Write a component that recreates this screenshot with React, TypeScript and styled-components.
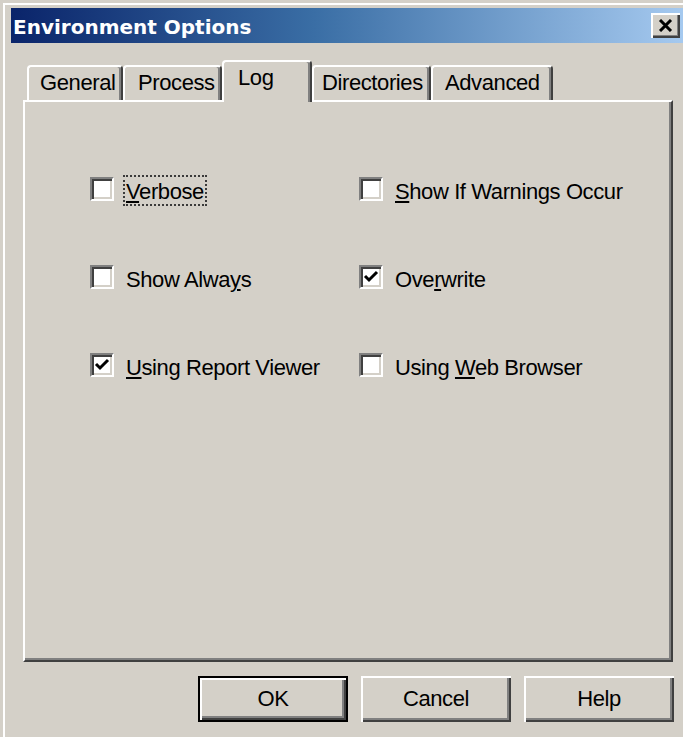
import React from "react";
import styled, { createGlobalStyle } from "styled-components";

const Global = createGlobalStyle`
  html, body {
    margin: 0;
    padding: 0;
    background: #d4d0c8;
    overflow: hidden;
  }
  * { box-sizing: border-box; }
`;

const UI_FONT = `"Liberation Sans", Arial, sans-serif`;

const Window = styled.div`
  width: 692px;
  height: 760px;
  padding: 8px 6px 0 11px;
  background: #d4d0c8;
  box-shadow: inset 3px 3px 0 #d4d0c8, inset 5px 5px 0 #ffffff;
  font-family: ${UI_FONT};
  font-size: 22px;
  letter-spacing: -0.4px;
  color: #000;
`;

const TitleBar = styled.div`
  height: 35px;
  display: flex;
  align-items: center;
  justify-content: space-between;
  padding: 2px 6px 0 2px;
  background: linear-gradient(90deg, #0a246a 0%, #3a6ea5 45%, #a6caf0 100%);
`;

const Title = styled.span`
  font-family: "DejaVu Sans", Verdana, sans-serif;
  font-weight: bold;
  font-size: 20px;
  letter-spacing: 0;
  color: #ffffff;
  line-height: 24px;
`;

const CloseButton = styled.button`
  width: 29px;
  height: 25px;
  margin-top: -2px;
  padding: 0;
  display: flex;
  align-items: center;
  justify-content: center;
  background: #d4d0c8;
  border: none;
  box-shadow: inset 2px 2px 0 #ffffff, inset -2px -2px 0 #404040,
    inset -3px -3px 0 #808080;
`;

const Body = styled.div`
  padding: 17px 0 0 12px;
  width: 662px;
`;

const TabStrip = styled.div`
  display: flex;
  align-items: flex-end;
  height: 40px;
  padding-left: 4px;
  position: relative;
  z-index: 1;
`;

const Tab = styled.div<{ $w: number; $active?: boolean; $pad: number }>`
  width: ${(p) => p.$w}px;
  height: ${(p) => (p.$active ? 42 : 35)}px;
  margin-bottom: ${(p) => (p.$active ? -2 : 0)}px;
  padding: 3px 0 0 ${(p) => p.$pad}px;
  line-height: 25px;
  white-space: nowrap;
  background: #d4d0c8;
  border-top: 2px solid #ffffff;
  border-left: 2px solid #ffffff;
  border-right: 2px solid #404040;
  border-top-left-radius: 4px;
  border-top-right-radius: 4px;
  box-shadow: inset -2px 0 0 #808080;
`;

const Panel = styled.div`
  width: 650px;
  height: 562px;
  background: #d4d0c8;
  border-top: 2px solid #ffffff;
  border-left: 2px solid #ffffff;
  border-right: 2px solid #404040;
  border-bottom: 2px solid #404040;
  box-shadow: inset -2px -2px 0 #808080;
  padding: 75px 0 0 65px;
`;

const OptionGrid = styled.div`
  display: grid;
  grid-template-columns: 269px auto;
  grid-auto-rows: 24px;
  row-gap: 64px;
`;

const Option = styled.div`
  display: flex;
  align-items: center;
  gap: 9px;
`;

const Box = styled.span`
  width: 24px;
  height: 24px;
  flex: none;
  display: flex;
  align-items: center;
  justify-content: center;
  background: #ffffff;
  border-top: 2px solid #808080;
  border-left: 2px solid #808080;
  border-right: 2px solid #ffffff;
  border-bottom: 2px solid #ffffff;
  box-shadow: inset 2px 2px 0 #404040, inset -2px -2px 0 #d4d0c8;
`;

const Label = styled.span<{ $focus?: boolean }>`
  padding: 2px 1px 0;
  line-height: 25px;
  white-space: nowrap;
  border: 2px dotted ${(p) => (p.$focus ? "#3a3a3a" : "transparent")};
  margin-top: 3px;
`;

const Key = styled.u`
  text-decoration-thickness: 2px;
  text-underline-offset: 2px;
`;

const ButtonRow = styled.div`
  display: flex;
  justify-content: flex-end;
  gap: 13px;
  margin-top: 14px;
  width: 651px;
`;

const Button = styled.button<{ $default?: boolean }>`
  width: 150px;
  height: 46px;
  padding: 0;
  font-family: ${UI_FONT};
  font-size: 22px;
  letter-spacing: -0.4px;
  color: #000;
  background: #d4d0c8;
  border: ${(p) => (p.$default ? "2px solid #000" : "none")};
  box-shadow: ${(p) =>
    p.$default
      ? "inset 2px 2px 0 #ffffff, inset -2px -2px 0 #404040, inset -4px -4px 0 #808080"
      : "inset 2px 2px 0 #ffffff, inset -2px -2px 0 #404040, inset -4px -4px 0 #808080"};
`;

const CheckMark = () => (
  <svg width="16" height="16" viewBox="0 0 16 16">
    <path d="M2 7 L6 11 L14 3" fill="none" stroke="#000" strokeWidth="3" />
  </svg>
);

const CloseGlyph = () => (
  <svg width="15" height="13" viewBox="0 0 15 13">
    <path d="M2 1 L13 12 M13 1 L2 12" stroke="#000" strokeWidth="3" />
  </svg>
);

type Opt = { id: string; checked: boolean; focus?: boolean; label: React.ReactNode };

const options: Opt[] = [
  { id: "verbose", checked: false, focus: true, label: <><Key>V</Key>erbose</> },
  { id: "warn", checked: false, label: <><Key>S</Key>how If Warnings Occur</> },
  { id: "always", checked: false, label: <>Show Alwa<Key>y</Key>s</> },
  { id: "overwrite", checked: true, label: <>Ove<Key>r</Key>write</> },
  { id: "viewer", checked: true, label: <><Key>U</Key>sing Report Viewer</> },
  { id: "browser", checked: false, label: <>Using <Key>W</Key>eb Browser</> },
];

const tabs = [
  { name: "General", w: 96, pad: 11 },
  { name: "Process", w: 99, pad: 13 },
  { name: "Log", w: 90, pad: 14, active: true },
  { name: "Directories", w: 119, pad: 8 },
  { name: "Advanced", w: 122, pad: 12 },
];

export default function App() {
  return (
    <>
      <Global />
      <Window>
        <TitleBar>
          <Title>Environment Options</Title>
          <CloseButton aria-label="Close">
            <CloseGlyph />
          </CloseButton>
        </TitleBar>
        <Body>
          <TabStrip>
            {tabs.map((t) => (
              <Tab key={t.name} $w={t.w} $pad={t.pad} $active={t.active}>
                {t.name}
              </Tab>
            ))}
          </TabStrip>
          <Panel>
            <OptionGrid>
              {options.map((o) => (
                <Option key={o.id}>
                  <Box>{o.checked && <CheckMark />}</Box>
                  <Label $focus={o.focus}>{o.label}</Label>
                </Option>
              ))}
            </OptionGrid>
          </Panel>
          <ButtonRow>
            <Button $default>OK</Button>
            <Button>Cancel</Button>
            <Button>Help</Button>
          </ButtonRow>
        </Body>
      </Window>
    </>
  );
}
